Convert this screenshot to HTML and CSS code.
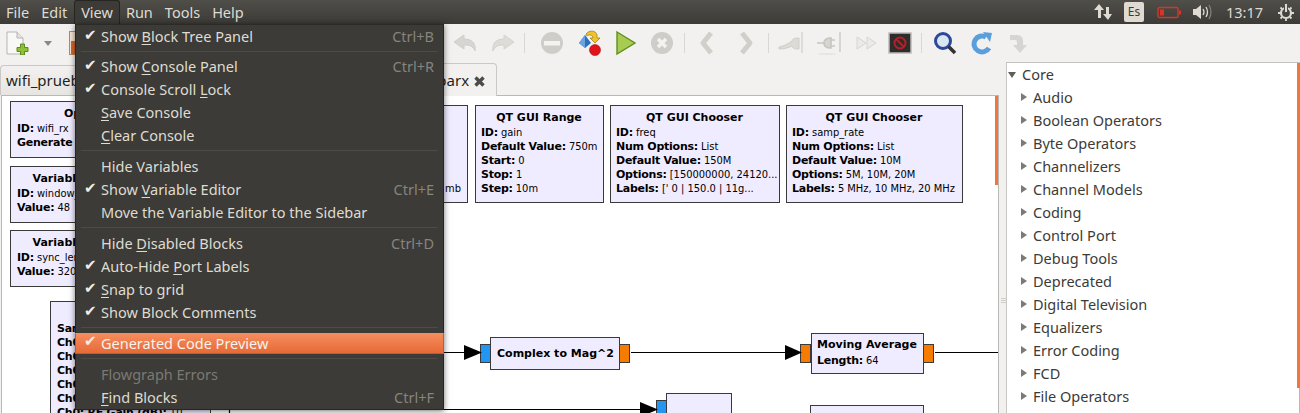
FILE: index.html
```html
<!DOCTYPE html>
<html lang="en">
<head>
<meta charset="utf-8">
<title>GNU Radio Companion</title>
<link rel="stylesheet" href="styles.css">
</head>
<body>
<div class="app">
  <header class="topbar">
    <nav class="menubar">
      <span class="mi">File</span><span class="mi">Edit</span><span class="mi open">View</span><span class="mi">Run</span><span class="mi">Tools</span><span class="mi">Help</span>
    </nav>
    <div class="tray">
      <svg class="t-net" width="22" height="18" viewBox="0 0 22 18"><path d="M6 1l5 6H8v8H5V7H1zM15 17l-5-6h3V4h3v7h3z" fill="#dfdbd2"/></svg>
      <span class="t-lang">Es</span>
      <svg class="t-bat" width="25" height="13" viewBox="0 0 25 13"><rect x="1" y="1.5" width="20" height="10" rx="1.5" fill="none" stroke="#d8352a" stroke-width="1.4"/><rect x="3" y="3.5" width="4" height="6" fill="#d8352a"/><rect x="22" y="4.5" width="2" height="4" fill="#d8352a"/></svg>
      <svg class="t-vol" width="21" height="16" viewBox="0 0 21 16"><path d="M1 5h3l5-4v14l-5-4H1z" fill="#dfdbd2"/><path d="M11 5q2 3 0 6M14 3q3 5 0 10" fill="none" stroke="#dfdbd2" stroke-width="1.3"/><path d="M17 1q4 7 0 14" fill="none" stroke="#85837c" stroke-width="1.2"/></svg>
      <span class="t-clock">13:17</span>
      <svg class="t-pow" width="18" height="18" viewBox="0 0 18 18"><circle cx="9" cy="10" r="5" fill="none" stroke="#dfdbd2" stroke-width="2.2"/><path d="M9 2v7" stroke="#3c3b37" stroke-width="4"/><path d="M9 1v8" stroke="#dfdbd2" stroke-width="2.2"/><path d="M1 10h2M15 10h2M3.500 4.500l1.500 1.500M14.500 4.500L13 6M3.500 15.500L5 14M14.500 15.500L13 14M9 16v2" stroke="#dfdbd2" stroke-width="1.8"/></svg>
    </div>
  </header>

  <div class="toolbar">
    <span class="tb"><svg width="24" height="24" viewBox="0 0 24 24"><path d="M1 1h10l6 6v16H1z" fill="#f8f8f6" stroke="#b5b5b0"/><path d="M11 1v6h6" fill="#e4e4e0" stroke="#b5b5b0"/><path d="M14.500 13h4v3.500H22v4h-3.500V24h-4v-3.500H11v-4h3.500z" fill="#8fbf3a" stroke="#5d8a1c"/></svg></span>
    <span class="tb-drop"></span>
    <span class="tb-hidden"><svg width="14" height="24" viewBox="0 0 14 24"><rect x=".5" y=".5" width="13" height="23" fill="#f4e3d2" stroke="#b98a60"/><rect x="2" y="10" width="10" height="13" fill="#d9662b"/></svg></span>
    <span class="tb-run"></span>

    <span class="tb"><svg width="30" height="22" viewBox="0 0 30 22"><path d="M13 3L3 10l10 7v-4c6 0 9 1 11 6 1-8-3-12-11-12z" fill="#d6d5d1" stroke="#cfcec9"/></svg></span>
    <span class="tb"><svg width="30" height="22" viewBox="0 0 30 22"><path d="M17 3l10 7-10 7v-4c-6 0-9 1-11 6-1-8 3-12 11-12z" fill="#dddcd8" stroke="#d3d2cd"/></svg></span>
    <span class="sep after-undo"></span>
    <span class="tb"><svg width="24" height="24" viewBox="0 0 24 24"><circle cx="12" cy="12" r="11" fill="#cfcdc9"/><rect x="4" y="10" width="16" height="4.500" fill="#f4f3f1"/></svg></span>
    <span class="tb gap2"><svg width="26" height="28" viewBox="0 0 26 28"><path d="M8 6l6 8-6 5-6-5z" fill="#2a6fc0"/><path d="M8 6l-6 8 6 5z" fill="#6ca2e0"/><path d="M9 5c3-4 10-4 11 1v3h3l-5 5-5-5h3c0-3-4-4-6-2z" fill="#f0c22e" stroke="#a5831a" stroke-width=".8"/><circle cx="18" cy="21" r="5.500" fill="#e0141a" stroke="#a80d12" stroke-width=".6"/></svg></span>
    <span class="tb"><svg width="24" height="26" viewBox="0 0 24 26"><path d="M3 2l18 11L3 24z" fill="#a8cc52" stroke="#5f8f1f" stroke-width="1.4"/></svg></span>
    <span class="tb"><svg width="24" height="24" viewBox="0 0 24 24"><circle cx="12" cy="12" r="11" fill="#cfcdc9"/><path d="M8 8l8 8M16 8l-8 8" stroke="#f4f3f1" stroke-width="3.400"/></svg></span>
    <span class="sep"></span>
    <span class="tb"><svg width="16" height="24" viewBox="0 0 16 24"><path d="M12 2L4 12l8 10" fill="none" stroke="#d0cfca" stroke-width="5" stroke-linejoin="round"/></svg></span>
    <span class="tb wide"><svg width="16" height="24" viewBox="0 0 16 24"><path d="M4 2l8 10-8 10" fill="none" stroke="#d0cfca" stroke-width="5" stroke-linejoin="round"/></svg></span>
    <span class="sep"></span>
    <span class="tb"><svg width="26" height="24" viewBox="0 0 26 24"><path d="M1 16c5-1 9-3 13-6 1-3 4-3 7-3v11c-3 0-6 0-7-3-4 2-8 3-13 3z" fill="#dcdbd7" stroke="#cfcec9"/><path d="M24 1v21" stroke="#cfcec9" stroke-width="1.200"/></svg></span>
    <span class="tb gap2"><svg width="26" height="24" viewBox="0 0 26 24"><path d="M1 12h7M8 12c0-4 3-5 7-5v10c-4 0-7-1-7-5zM15 9h4M15 15h4" fill="#d6d5d1" stroke="#c6c5c0" stroke-width="1.600"/><path d="M24 1v20" stroke="#cfcec9" stroke-width="1.600"/><ellipse cx="11" cy="23" rx="9" ry="1" fill="#e6e5e2"/></svg></span>
    <span class="tb gap2"><svg width="22" height="14" viewBox="0 0 22 14"><path d="M1 1l9 6-9 6zM11 1l9 6-9 6z" fill="#ebeae7" stroke="#d6d5d1"/></svg></span>
    <span class="tb narrow"><svg width="24" height="22" viewBox="0 0 24 22"><rect x="1" y="1" width="22" height="20" fill="#2e2d2b" stroke="#bcbbb7" stroke-width="1.500"/><circle cx="12" cy="11" r="5.500" fill="none" stroke="#b3222a" stroke-width="2"/><path d="M8 7l8 8" stroke="#b3222a" stroke-width="2"/></svg></span>
    <span class="sep gap-before"></span>
    <span class="tb gap1"><svg width="24" height="24" viewBox="0 0 24 24"><circle cx="10" cy="10" r="7.500" fill="#dbe6f3" stroke="#2b4a9b" stroke-width="3"/><path d="M15.500 15.500l6.500 6.500" stroke="#333" stroke-width="3.500"/></svg></span>
    <span class="tb gap1"><svg width="22" height="24" viewBox="0 0 22 24"><path d="M18 17a8 8 0 1 1-3-11" fill="none" stroke="#5a9fdc" stroke-width="5"/><path d="M12 1l9 1-2 9z" fill="#5a9fdc"/></svg></span>
    <span class="tb"><svg width="22" height="24" viewBox="0 0 22 24"><path d="M3 4h7q6 0 6 6v4h4l-7 8-7-8h4v-3q0-2-2-2H3z" fill="#d6d5d1"/></svg></span>
  </div>

  <div class="workspace">
    <section class="editor">
      <div class="tabs">
        <span class="tab first">wifi_prueba.grc</span>
        <span class="tab active">wifi_parx <svg class="tab-x" width="13" height="13" viewBox="0 0 13 13"><path d="M2.500 2.500l8 8M10.500 2.500l-8 8" stroke="#4c4b47" stroke-width="3.400"/></svg></span>
      </div>
      <div class="canvas">
        <div class="block opts"><div class="b-title">Options</div><div><b>ID:</b> wifi_rx</div><div><b>Generate Options:</b> QT GUI</div></div>
        <div class="block var1"><div class="b-title">Variable</div><div><b>ID:</b> window_size</div><div><b>Value:</b> 48</div></div>
        <div class="block var2"><div class="b-title">Variable</div><div><b>ID:</b> sync_length</div><div><b>Value:</b> 320</div></div>
        <div class="block src"><div class="b-spacer"></div><div><b>Samp Rate (Sps):</b> 10M</div><div><b>Ch0: Center Freq:</b> 150M</div><div><b>Ch0: Freq Corr:</b> 0</div><div><b>Ch0: DC Offset:</b> 0</div><div><b>Ch0: IQ Balance:</b> 0</div><div><b>Ch0: Gain Mode:</b> False</div><div><b>Ch0: RF Gain (dB):</b> 10</div></div>
        <div class="block hid"><div class="b-title">QT GUI Range</div><div><b>ID:</b> lna_gain</div><div><b>Default:</b> 10</div><div><b>Start:</b> 0</div><div><b>Stop:</b> 1</div><div class="right">mb</div></div>
        <div class="block range"><div class="b-title">QT GUI Range</div><div><b>ID:</b> gain</div><div><b>Default Value:</b> 750m</div><div><b>Start:</b> 0</div><div><b>Stop:</b> 1</div><div><b>Step:</b> 10m</div></div>
        <div class="block ch1"><div class="b-title">QT GUI Chooser</div><div><b>ID:</b> freq</div><div><b>Num Options:</b> List</div><div><b>Default Value:</b> 150M</div><div><b>Options:</b> [150000000, 24120...</div><div><b>Labels:</b> [' 0 | 150.0 | 11g...</div></div>
        <div class="block ch2"><div class="b-title">QT GUI Chooser</div><div><b>ID:</b> samp_rate</div><div><b>Num Options:</b> List</div><div><b>Default Value:</b> 10M</div><div><b>Options:</b> 5M, 10M, 20M</div><div><b>Labels:</b> 5 MHz, 10 MHz, 20 MHz</div></div>
        <div class="block mag"><span class="b-title-inline">Complex to Mag^2</span></div>
        <div class="block avg"><div class="b-avg-title">Moving Average</div><div><b>Length:</b> 64</div></div>
        <div class="block low1"></div>
        <div class="block low2"></div>
        <span class="port in p-mag-in"></span><span class="port out p-mag-out"></span>
        <span class="port out p-avg-in"></span><span class="port out p-avg-out"></span>
        <span class="port in p-low-in"></span>
        <svg class="wires" width="996" height="318" viewBox="0 0 996 318">
          <g fill="none" stroke="#000" stroke-width="1.200"><path d="M400 256.500H470M629 256.500H790M933 256.500H996M227.500 318V313.500H645"/></g>
          <g fill="#000"><path d="M462 249l18 7.500-18 7.500zM783 249l17 7.500-17 7.500zM638 306l18 7.500-18 7.500z"/></g>
        </svg>
        <span class="v-scroll"></span>
      </div>
    </section>
    <div class="grip"><i></i><i></i><i></i></div>
    <aside class="tree">
      <div class="row root"><span class="tw down"></span>Core</div>
      <div class="row"><span class="tw"></span>Audio</div>
      <div class="row"><span class="tw"></span>Boolean Operators</div>
      <div class="row"><span class="tw"></span>Byte Operators</div>
      <div class="row"><span class="tw"></span>Channelizers</div>
      <div class="row"><span class="tw"></span>Channel Models</div>
      <div class="row"><span class="tw"></span>Coding</div>
      <div class="row"><span class="tw"></span>Control Port</div>
      <div class="row"><span class="tw"></span>Debug Tools</div>
      <div class="row"><span class="tw"></span>Deprecated</div>
      <div class="row"><span class="tw"></span>Digital Television</div>
      <div class="row"><span class="tw"></span>Equalizers</div>
      <div class="row"><span class="tw"></span>Error Coding</div>
      <div class="row"><span class="tw"></span>FCD</div>
      <div class="row"><span class="tw"></span>File Operators</div>
      <span class="tree-scroll"></span>
    </aside>
  </div>

  <div class="menu">
    <div class="m c">Show <u>B</u>lock Tree Panel<kbd>Ctrl+B</kbd></div>
    <hr class="first-sep">
    <div class="m c">Show <u>C</u>onsole Panel<kbd>Ctrl+R</kbd></div>
    <div class="m c">Console Scroll <u>L</u>ock</div>
    <div class="m"><u>S</u>ave Console</div>
    <div class="m"><u>C</u>lear Console</div>
    <hr>
    <div class="m">Hide Variables</div>
    <div class="m c">Show <u>V</u>ariable Editor<kbd>Ctrl+E</kbd></div>
    <div class="m">Move the Variable Editor to the Sidebar</div>
    <hr>
    <div class="m">Hide <u>D</u>isabled Blocks<kbd>Ctrl+D</kbd></div>
    <div class="m c">Auto-Hide <u>P</u>ort Labels</div>
    <div class="m c"><u>S</u>nap to grid</div>
    <div class="m c">Show Block Comments</div>
    <hr>
    <div class="m c hi">Generated Code Preview</div>
    <hr>
    <div class="m dis">Flowgraph Errors</div>
    <div class="m"><u>F</u>ind Blocks<kbd>Ctrl+F</kbd></div>
  </div>
</div>
</body>
</html>
```
FILE: styles.css
```css
* { box-sizing: border-box; }
html, body { margin: 0; height: 100%; overflow: hidden; }
body { font-family: "Noto Sans", sans-serif; font-size: 14.5px; background: #f2f1f0; }
.app { position: relative; width: 1300px; height: 413px; overflow: hidden; display: flex; flex-direction: column; }

.topbar { height: 24px; flex: none; display: flex; justify-content: space-between; align-items: center; background: linear-gradient(#4f4e49, #3c3b37); color: #dfdbd2; }
.menubar { display: flex; height: 24px; }
.mi { padding: 0 6px; line-height: 24px; height: 24px; }
.mi.open { background: #3c3b37; border: 1px solid #26251f; border-bottom: 0; border-radius: 3px 3px 0 0; margin-left: 1px; padding: 0 6px; line-height: 22px; }
.tray { display: flex; align-items: center; height: 24px; }
.t-net { margin-right: 9px; }
.t-lang { width: 20px; height: 20px; background: #dfdbd2; color: #3c3b37; border-radius: 2px; font-size: 12px; line-height: 20px; text-align: center; margin-right: 13px; }
.t-bat { margin-right: 10px; }
.t-vol { margin-right: 13px; }
.t-clock { margin-right: 14px; }
.t-pow { margin-right: 5px; }

.toolbar { height: 38px; flex: none; display: flex; align-items: center; background: #f2f1ef; }
.tb { width: 36px; height: 32px; flex: none; display: flex; align-items: center; justify-content: center; }
.tb.wide { margin-left: 3px; }
.tb.narrow { width: 30px; }
.tb.gap1 { margin-left: 1px; }
.tb.gap2 { margin-left: 2px; }
.tb-drop { width: 0; height: 0; margin-left: 8px; border-left: 4px solid transparent; border-right: 4px solid transparent; border-top: 5px solid #8a8985; flex: none; }
.tb-hidden { margin-left: 17px; flex: none; display: flex; }
.tb-run { width: 365px; flex: none; }
.sep { width: 1px; height: 20px; background: #d8d7d3; margin: 0 4px; flex: none; }
.sep.after-undo { margin-right: 9px; }
.sep.gap-before { margin-left: 6px; }

.workspace { flex: 1; display: flex; min-height: 0; }
.editor { width: 1000px; flex: none; display: flex; flex-direction: column; }
.tabs { height: 33px; flex: none; display: flex; align-items: flex-end; position: relative; z-index: 1; }
.tab { height: 30px; line-height: 29px; font-size: 15px; color: #1f1f1d; padding: 0 0 0 5px; background: linear-gradient(#f2f1ef, #e6e5e2); border: 1px solid #c9c8c4; border-bottom: 0; border-radius: 4px 4px 0 0; white-space: nowrap; }
.tab.first { width: 230px; }
.tab.active { width: 267px; height: 33px; line-height: 32px; text-align: right; padding: 0 10px 0 0; background: #f2f1ef; margin-bottom: -1px; }
.tab-x { vertical-align: -2px; }

.canvas { position: relative; flex: 1; margin: 0 1px; background: #fff; border: 1px solid #b9b8b4; border-bottom: 0; overflow: hidden; font-family: "DejaVu Sans Condensed", "DejaVu Sans", sans-serif; font-size: 11px; line-height: 14px; color: #000; }
.block { position: absolute; background: #f0ecff; border: 1px solid #3a3a3a; padding: 5px 6px 0; white-space: nowrap; overflow: hidden; }
.block b { font-family: "DejaVu Sans", sans-serif; letter-spacing: -.25px; }
.b-title, .b-avg-title, .b-title-inline { font-family: "DejaVu Sans", sans-serif; font-weight: bold; }
.b-title { text-align: center; margin-bottom: 1px; }
.right { text-align: right; }
.opts { left: 8px; top: 5px; width: 156px; height: 57px; }
.var1 { left: 8px; top: 70px; width: 96px; height: 57px; }
.var2 { left: 8px; top: 134px; width: 96px; height: 57px; }
.src { left: 48px; top: 205px; width: 161px; height: 130px; }
.b-spacer { height: 15px; }
.hid { left: 300px; top: 9px; width: 166px; height: 98px; }
.range { left: 473px; top: 9px; width: 129px; height: 98px; padding-left: 5px; }
.ch1 { left: 608px; top: 9px; width: 170px; height: 98px; padding-left: 5px; }
.ch2 { left: 784px; top: 9px; width: 177px; height: 98px; padding-left: 5px; }
.mag { left: 488px; top: 241px; width: 130px; height: 33px; padding: 9px 6px 0; }
.avg { left: 809px; top: 237px; width: 113px; height: 41px; padding: 4px 5px 0; }
.b-avg-title { margin-bottom: 2px; }
.low1 { left: 664px; top: 297px; width: 66px; height: 40px; }
.low2 { left: 808px; top: 309px; width: 114px; height: 40px; }
.port { position: absolute; width: 11px; height: 19px; border: 1px solid #3a3a3a; }
.port.in { background: #2196f3; }
.port.out { background: #f57c00; }
.p-mag-in { left: 478px; top: 248px; }
.p-mag-out { left: 617px; top: 248px; }
.p-avg-in { left: 798px; top: 248px; }
.p-avg-out { left: 921px; top: 248px; }
.p-low-in { left: 654px; top: 304px; height: 30px; }
.wires { position: absolute; left: 0; top: 0; overflow: visible; }
.v-scroll { position: absolute; left: 993px; top: 0; width: 3px; height: 89px; background: #f0763c; }

.grip { width: 6px; flex: none; display: flex; flex-direction: column; align-items: center; justify-content: center; gap: 1px; margin-top: 232px; height: 12px; }
.grip i { width: 5px; height: 1px; background: #cfcec9; }
.tree { position: relative; flex: 1; background: #fff; border-left: 1px solid #c9c8c4; border-top: 1px solid #c4c3bf; border-right: 1px solid #b9b8b4; color: #3c3b37; }
.row { height: 23px; line-height: 23px; padding-left: 26px; position: relative; }
.root { padding-left: 15px; }
.tw { position: absolute; left: 14px; top: 7px; width: 0; height: 0; border-left: 6px solid #7b7a75; border-top: 4px solid transparent; border-bottom: 4px solid transparent; }
.tw.down { left: 1px; top: 9px; border-left: 4px solid transparent; border-right: 4px solid transparent; border-top: 6px solid #5f5e5a; border-bottom: 0; }
.tree-scroll { position: absolute; right: -1px; top: 0; width: 3px; height: 325px; background: #f0763c; }

.menu { position: absolute; z-index: 5; left: 75px; top: 24px; width: 369px; height: 386px; background: #3c3b37; border: 1px solid #26251f; border-top-color: #2c2b27; box-shadow: 0 1px 6px rgba(0,0,0,.55); color: #dfdbd2; }
.m { height: 23px; line-height: 22px; padding-left: 25px; position: relative; white-space: nowrap; }
.m u { text-underline-offset: 2px; }
.m.c::before { content: "\2714"; position: absolute; left: 8px; top: -1px; font-family: "DejaVu Sans", sans-serif; font-size: 15px; color: #f0ede6; }
.m kbd { position: absolute; right: 9px; top: 0; font: inherit; color: #85847e; }
.menu hr { height: 1px; border: 0; margin: 3px 5px 4px; padding: 0; background: #4c4b46; }
.menu hr.first-sep { margin-bottom: 3px; }
.m.hi { background: linear-gradient(#f58c5c, #e76a38); margin: 5px 0 4px -1px; width: 369px; height: 21px; padding-left: 25px; border: 1px solid #d0562a; border-top-color: #f58c5c; line-height: 19px; color: #f5f2ec; }
.m.hi::before { left: 8px; top: -2px; }
.dis { color: #7a7973; }
```
